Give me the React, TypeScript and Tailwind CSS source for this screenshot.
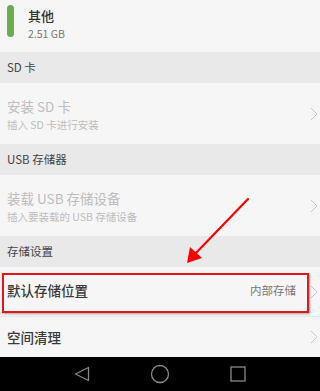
import React from 'react';

const font = { fontFamily: '"Noto Sans CJK SC", "Noto Sans", sans-serif' };

const Chevron: React.FC = () => (
  <svg width="8" height="14" viewBox="0 0 8 14" className="shrink-0">
    <path d="M1 1 L7 7 L1 13" fill="none" stroke="#c8c8c8" strokeWidth="1" />
  </svg>
);

const Header: React.FC<{ title: string }> = ({ title }) => (
  <div className="h-[31px] bg-[#e9e9e9] flex items-center px-[7px] text-[11.5px] text-[#444]">{title}</div>
);

const DisabledItem: React.FC<{ title: string; sub: string }> = ({ title, sub }) => (
  <div className="h-[61px] flex items-center pl-[7px] pr-[2px]">
    <div className="flex-1 flex flex-col">
      <span className="text-[13.5px] leading-[18px] text-[#bdbdbd] mt-[2px]">{title}</span>
      <span className="text-[10.5px] leading-[14px] text-[#bdbdbd] mt-[3px]">{sub}</span>
    </div>
    <Chevron />
  </div>
);

export default function App() {
  return (
    <div className="relative w-[320px] h-[391px] overflow-hidden bg-[#f6f6f6]" style={font}>
      <div className="h-[52px] flex items-start pl-[7px] pt-[5px]">
        <div className="w-[7px] h-[32px] rounded-full bg-[#69ad4f]" />
        <div className="ml-[14px] flex flex-col">
          <span className="text-[13px] leading-[17px] text-[#333] font-medium mt-[2px]">其他</span>
          <span className="text-[10.5px] leading-[14px] text-[#777] mt-[3px]">2.51 GB</span>
        </div>
      </div>
      <Header title="SD 卡" />
      <DisabledItem title="安装 SD 卡" sub="插入 SD 卡进行安装" />
      <Header title="USB 存储器" />
      <DisabledItem title="装载 USB 存储设备" sub="插入要装载的 USB 存储设备" />
      <Header title="存储设置" />
      <div className="h-[50px] flex items-center pl-[7px] pr-[2px] border-b border-[#e6e6e6]">
        <span className="flex-1 text-[13.5px] text-[#3a3a3a] font-medium -mt-[2px]">默认存储位置</span>
        <span className="text-[11.5px] text-[#777] mr-[14px] -mt-[2px]">内部存储</span>
        <Chevron />
      </div>
      <div className="h-[40px] flex items-center pl-[7px] pr-[2px]">
        <span className="flex-1 text-[13.5px] text-[#3a3a3a] font-medium">空间清理</span>
        <Chevron />
      </div>
      <div className="h-[34px] bg-black flex items-center justify-center gap-[60px]">
        <svg width="16" height="16" viewBox="0 0 16 16">
          <path d="M14.5 1.5 L1.5 8 L14.5 14.5 Z" fill="none" stroke="#8a8a8a" strokeWidth="1.3" strokeLinejoin="round" />
        </svg>
        <svg width="20" height="20" viewBox="0 0 20 20">
          <circle cx="10" cy="10" r="8.5" fill="none" stroke="#8a8a8a" strokeWidth="1.3" />
        </svg>
        <svg width="16" height="16" viewBox="0 0 16 16">
          <rect x="1" y="1" width="14" height="14" fill="none" stroke="#8a8a8a" strokeWidth="1.3" />
        </svg>
      </div>

      <div className="absolute left-[2px] top-[273px] w-[307px] h-[40px] border-2 border-[#e8141b] shadow-[1px_1px_2px_rgba(0,0,0,0.35)]" />
      <svg className="absolute left-0 top-0 pointer-events-none" width="320" height="391" viewBox="0 0 320 391">
        <line x1="248" y1="199" x2="194" y2="255" stroke="#f00" strokeWidth="2.2" strokeLinecap="round" />
        <path d="M187 263 L190 247 L202 258 Z" fill="#f00" />
      </svg>
    </div>
  );
}
